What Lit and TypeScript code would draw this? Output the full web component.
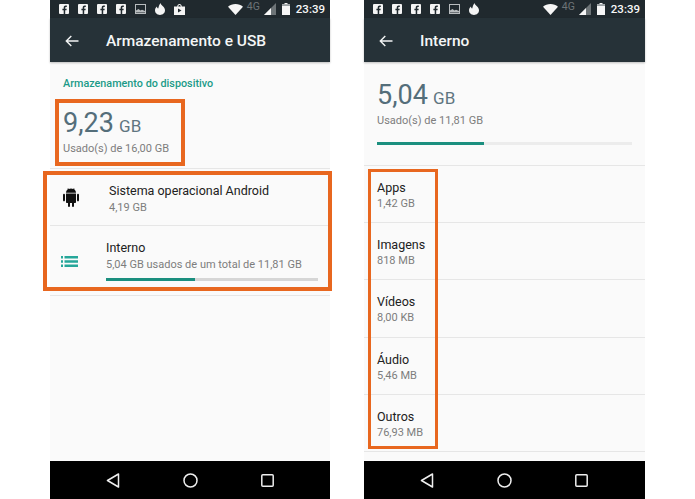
import { LitElement, html, css, svg } from "lit";
import { customElement } from "lit/decorators.js";

const fb = html`<svg class="si" viewBox="0 0 10 10" width="10" height="10"><rect width="10" height="10" rx="1" fill="#f4f4f4"/><path d="M6.2 10V6.2h1.3l.2-1.5H6.2v-.9c0-.5.2-.8.8-.8h.8V1.6C7.5 1.5 7.1 1.5 6.7 1.5 5.5 1.5 4.7 2.2 4.7 3.6v1.1H3.4v1.5h1.3V10z" fill="#20292e"/></svg>`;
const pic = html`<svg class="si" viewBox="0 0 11 10" width="11" height="10"><rect x=".5" y=".5" width="10" height="9" fill="none" stroke="#b8bcbe"/><path d="M1 8V6.5L3.5 5l2 1.5 1.500-.8L10 7v1.500H1z" fill="#b8bcbe"/></svg>`;
const flame = html`<svg class="si" viewBox="0 0 10 12" width="10" height="12"><path d="M5.500 0c.5 2.500 4.500 3.800 4.500 7.300C10 10 7.800 12 5 12S0 10 0 7.300C0 5.500 1 4.300 2 3.500c0 1 .4 1.800 1.200 2C3.800 3.800 4 1.800 5.500 0z" fill="#f4f4f4"/></svg>`;
const bag = html`<svg class="si" viewBox="0 0 11 11" width="11" height="11"><path d="M0 2.500h3.200C3.300 1 4.200 0 5.500 0s2.200 1 2.300 2.500H11V11H0z" fill="#f4f4f4"/><path d="M4.200 2.500C4.300 1.600 4.800 1 5.500 1s1.200.6 1.300 1.500z" fill="#20292e"/><path d="M4 4.500 7.500 6.500 4 8.500z" fill="#20292e"/></svg>`;

const statusRight = html`
  <svg class="wifi" viewBox="0 0 15 11" width="15" height="11"><path d="M0 2.700C2 1 4.600 0 7.500 0s5.500 1 7.500 2.700L7.500 11z" fill="#f6f6f6"/></svg>
  <span class="g4">4G</span>
  <svg class="sig" viewBox="0 0 12 12" width="12" height="12"><path d="M0 12 12 0v12z" fill="#6d7477"/><path d="M0 12 7 5v7z" fill="#f6f6f6"/></svg>
  <svg class="bat" viewBox="0 0 8 12" width="8" height="12"><path d="M2.500 0h3v1.200H8V12H0V1.200h2.500z" fill="#f6f6f6"/><path d="M0 1.200h8v1.800H0z" fill="#9aa0a3"/></svg>
  <span class="time">23:39</span>`;

const back = html`<svg class="back" viewBox="0 0 14 12" width="14" height="12"><path d="M13.500 6H1.500M6.300 1 1.300 6l5 5" fill="none" stroke="#f2f4f4" stroke-width="1.400"/></svg>`;

const nav = html`<div class="nav">
  <svg viewBox="0 0 14 15" width="14" height="15"><path d="M12.500 1 1.500 7.500l11 6.500z" fill="none" stroke="#eeeeee" stroke-width="1.500" stroke-linejoin="round"/></svg>
  <svg viewBox="0 0 15 15" width="15" height="15"><circle cx="7.500" cy="7.500" r="6.500" fill="none" stroke="#eeeeee" stroke-width="1.500"/></svg>
  <svg viewBox="0 0 13 13" width="13" height="13"><rect x=".8" y=".8" width="11.400" height="11.400" rx="1" fill="none" stroke="#eeeeee" stroke-width="1.500"/></svg>
</div>`;

const android = svg`<path d="M3 5h10v7.500c0 .6-.4 1-1 1h-1v2.500a1 1 0 0 1-2 0v-2.500H7v2.500a1 1 0 0 1-2 0v-2.500H4c-.6 0-1-.4-1-1zM0 6.200a1 1 0 0 1 2 0v4.800a1 1 0 0 1-2 0zM14 6.200a1 1 0 0 1 2 0v4.800a1 1 0 0 1-2 0zM3 4.300C3.100 2.700 4 1.500 5.200 1L4.500.2 4.900 0l.9 1a5 5 0 0 1 4.400 0l.9-1 .4.200L10.800 1C12 1.500 12.900 2.700 13 4.300z" fill="#111"/>`;

const rows = [
  ["Apps", "1,42 GB"],
  ["Imagens", "818 MB"],
  ["Vídeos", "8,00 KB"],
  ["Áudio", "5,46 MB"],
  ["Outros", "76,93 MB"],
];

@customElement("app-root")
export class AppRoot extends LitElement {
  static styles = css`
    :host { display: block; width: 695px; height: 499px; background: #fff; font-family: Roboto, "Liberation Sans", sans-serif; overflow: hidden; }
    .stage { display: flex; height: 499px; padding-left: 50px; gap: 34px; box-sizing: border-box; }
    .phone { position: relative; width: 281px; height: 499px; display: flex; flex-direction: column; background: #fafafa; }
    .phone.left { width: 280px; }
    .status { height: 18px; background: #20292e; display: flex; align-items: center; padding: 0 5px 0 9px; gap: 9px; color: #f6f6f6; }
    .si { flex: none; }
    .spacer { flex: 1; }
    .wifi { margin-right: -5px; }
    .g4 { font-size: 10.500px; color: #6d7477; margin-right: -5px; margin-top: -5px; }
    .sig { margin-right: -3px; }
    .bat { margin-right: -3px; }
    .time { font-size: 11.500px; font-weight: 500; color: #f6f6f6; }
    .bar { height: 44px; box-sizing: border-box; padding: 2px 0 0 15px; background: #263238; display: flex; align-items: center; color: #f4f6f6; box-shadow: 0 1px 2px rgba(0,0,0,.25); z-index: 1; font-size: 15.500px; font-weight: 500; }
    .back { margin-right: 27px; }
    .content { flex: 1; display: flex; flex-direction: column; min-height: 0; }
    .nav { height: 38px; background: #000; display: flex; align-items: center; padding-left: 56px; gap: 63px; }
    .nav svg { flex: none; }

    .head { height: 107px; box-sizing: border-box; padding: 15px 0 0 13px; border-bottom: 1px solid #e6e6e6; }
    .cat { font-size: 10.800px; font-weight: 500; color: #1b9a88; line-height: 13px; margin-bottom: 16px; }
    .big { font-size: 27px; color: #546e7a; line-height: 34px; height: 34px; font-weight: 400; }
    .big small { font-size: 17px; line-height: 1; color: #5f7580; margin-left: -1.500px; }
    .sub { font-size: 11px; color: #7d7d7d; line-height: 14px; margin-top: 2px; }
    .r { display: flex; align-items: center; border-bottom: 1px solid #e6e6e6; box-sizing: border-box; }
    .r1 { height: 57px; padding: 4px 0 0 13px; }
    .r2 { height: 70px; padding-left: 11px; align-items: flex-start; }
    .ic1 { width: 16px; height: 19px; margin: -4px 30px 0 0; flex: none; }
    .ic2 { width: 17px; height: 11px; margin: 30px 28px 0 0; flex: none; }
    .t { font-size: 12.500px; color: #212121; line-height: 16px; }
    .s { font-size: 11px; color: #7d7d7d; line-height: 14px; margin-top: 2px; }
    .r2 .col { padding-top: 14px; flex: 1; padding-right: 12px; }
    .track { height: 3px; background: #d6d6d6; margin-top: 6px; }
    .track.lite { background: #ececec; }
    .fill { height: 100%; background: #1b8f7f; }

    .head2 { height: 104px; box-sizing: border-box; padding: 16px 13px 0 13px; border-bottom: 1px solid #e6e6e6; }
    .head2 .sub { margin-top: 2px; }
    .head2 .track { margin-top: 14px; }
    .item { height: 57.200px; box-sizing: border-box; padding: 14px 0 0 13px; border-bottom: 1px solid #e6e6e6; flex: none; }
    .item .s { margin-top: 1px; }

    .mark { position: absolute; border: 4px solid #e8671f; box-sizing: border-box; pointer-events: none; z-index: 2; }
    .m1 { left: 5px; top: 99px; width: 130px; height: 67px; }
    .m2 { left: -7px; top: 171px; width: 289px; height: 120px; }
    .m3 { left: 4px; top: 169px; width: 70px; height: 280px; border-width: 3.500px; }
  `;

  render() {
    return html`<div class="stage">
      <section class="phone left">
        <div class="status">${fb}${fb}${fb}${fb}${pic}${flame}${bag}<span class="spacer"></span>${statusRight}</div>
        <div class="bar">${back}<span>Armazenamento e USB</span></div>
        <div class="content">
          <div class="head">
            <div class="cat">Armazenamento do dispositivo</div>
            <div class="big">9,23 <small>GB</small></div>
            <div class="sub">Usado(s) de 16,00 GB</div>
          </div>
          <div class="r r1">
            <svg class="ic1" viewBox="0 0 16 17" preserveAspectRatio="none">${android}</svg>
            <div><div class="t">Sistema operacional Android</div><div class="s">4,19 GB</div></div>
          </div>
          <div class="r r2">
            <svg class="ic2" viewBox="0 0 17 11"><path d="M0 0h2v2.500H0zM3.500 0H17v2.500H3.500zM0 4.200h2v2.500H0zM3.500 4.200H17v2.500H3.500zM0 8.400h2V11H0zM3.500 8.400H17V11H3.500z" fill="#26a79a"/></svg>
            <div class="col">
              <div class="t">Interno</div>
              <div class="s">5,04 GB usados de um total de 11,81 GB</div>
              <div class="track"><div class="fill" style="width:42%"></div></div>
            </div>
          </div>
        </div>
        ${nav}
        <div class="mark m1"></div>
        <div class="mark m2"></div>
      </section>
      <section class="phone">
        <div class="status">${fb}${fb}${fb}${fb}${pic}${flame}<span class="spacer"></span>${statusRight}</div>
        <div class="bar in">${back}<span>Interno</span></div>
        <div class="content">
          <div class="head2">
            <div class="big">5,04 <small>GB</small></div>
            <div class="sub">Usado(s) de 11,81 GB</div>
            <div class="track lite"><div class="fill" style="width:42%"></div></div>
          </div>
          ${rows.map(([a, b]) => html`<div class="item"><div class="t">${a}</div><div class="s">${b}</div></div>`)}
        </div>
        ${nav}
        <div class="mark m3"></div>
      </section>
    </div>`;
  }
}
